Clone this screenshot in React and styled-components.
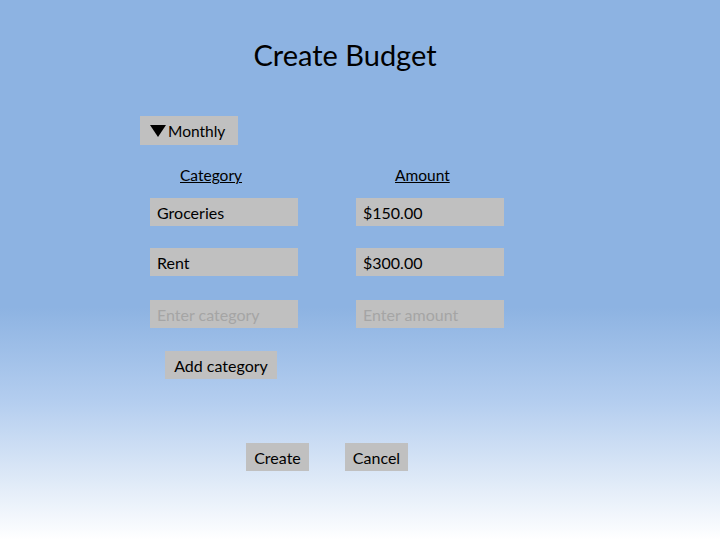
import React from "react";
import styled, { createGlobalStyle } from "styled-components";

const GlobalStyle = createGlobalStyle`
  html, body {
    margin: 0;
    padding: 0;
  }
  body {
    font-family: Lato, "Open Sans", sans-serif;
    color: #000;
  }
`;

const Slide = styled.div`
  width: 720px;
  height: 540px;
  box-sizing: border-box;
  overflow: hidden;
  background: linear-gradient(
    180deg,
    #8db3e2 0%,
    #8db3e2 57%,
    #b3cdef 74%,
    #dce8f7 88%,
    #ffffff 100%
  );
  display: flex;
  flex-direction: column;
  padding-top: 37px;
`;

const Title = styled.h1`
  margin: 0;
  padding-right: 30px;
  text-align: center;
  font-size: 29px;
  font-weight: 400;
  line-height: 36px;
`;

const Form = styled.div`
  display: flex;
  flex-direction: column;
  align-items: flex-start;
  padding-left: 140px;
  margin-top: 43px;
`;

const GrayBox = styled.div`
  background: #c0c0c0;
  height: 29px;
  box-sizing: border-box;
  display: flex;
  align-items: center;
  font-size: 16px;
  white-space: nowrap;
`;

const Dropdown = styled(GrayBox)`
  width: 98px;
  padding-left: 10px;
  gap: 2px;
  font-size: 15.5px;
`;

const Triangle = styled.span`
  width: 0;
  height: 0;
  border-left: 8px solid transparent;
  border-right: 8px solid transparent;
  border-top: 12px solid #000;
  margin-top: 1px;
`;

const Grid = styled.div`
  display: grid;
  grid-template-columns: 148px 148px;
  column-gap: 58px;
  margin-left: 10px;
  margin-top: 21px;
`;

const Header = styled.div`
  font-size: 15.5px;
  text-decoration: underline;
  padding-left: ${(p) => p.$indent}px;
  height: 18px;
  line-height: 18px;
  margin-bottom: 14px;
`;

const Field = styled(GrayBox)`
  width: 148px;
  height: 28px;
  padding-left: 7px;
  padding-top: 1px;
  margin-bottom: ${(p) => p.$gap}px;
  color: ${(p) => (p.$placeholder ? "#a5a5a5" : "#000")};
`;

const Button = styled(GrayBox)`
  justify-content: center;
  width: ${(p) => p.$width}px;
  height: 28px;
  padding-top: 1px;
`;

const AddRow = styled.div`
  margin-left: 25px;
  margin-top: 23px;
`;

const Actions = styled.div`
  display: flex;
  gap: 36px;
  margin-left: 106px;
  margin-top: 64px;
`;

const rows = [
  { category: "Groceries", amount: "$150.00", gap: 22 },
  { category: "Rent", amount: "$300.00", gap: 24 },
];

export default function App() {
  return (
    <>
      <GlobalStyle />
      <Slide>
        <Title>Create Budget</Title>
        <Form>
          <Dropdown>
            <Triangle />
            Monthly
          </Dropdown>
          <Grid>
            <Header $indent={30}>Category</Header>
            <Header $indent={39}>Amount</Header>
            {rows.map((r) => (
              <React.Fragment key={r.category}>
                <Field $gap={r.gap}>{r.category}</Field>
                <Field $gap={r.gap}>{r.amount}</Field>
              </React.Fragment>
            ))}
            <Field $placeholder $gap={0}>
              Enter category
            </Field>
            <Field $placeholder $gap={0}>
              Enter amount
            </Field>
          </Grid>
          <AddRow>
            <Button $width={112}>Add category</Button>
          </AddRow>
          <Actions>
            <Button $width={63}>Create</Button>
            <Button $width={63}>Cancel</Button>
          </Actions>
        </Form>
      </Slide>
    </>
  );
}
